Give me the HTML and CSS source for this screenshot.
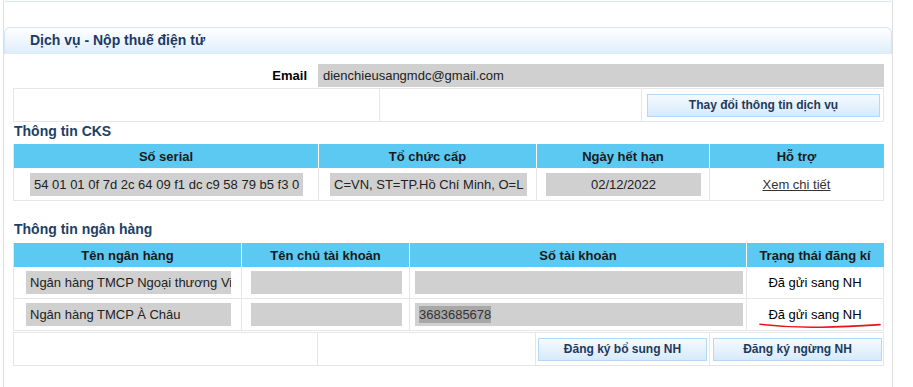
FILE: index.html
```html
<!DOCTYPE html>
<html lang="vi">
<head>
    <meta charset="UTF-8">
    <meta name="viewport" content="width=device-width, initial-scale=1.0">
    <title>Dịch vụ - Nộp thuế điện tử</title>
    <link rel="stylesheet" href="styles.css">
</head>
<body>
    <div class="page">
        <div class="prev-panel"></div>

        <div class="panel-head">Dịch vụ - Nộp thuế điện tử</div>

        <div class="panel-body">
            <div class="email-row">
                <div class="email-label">Email</div>
                <div class="field email-field">dienchieusangmdc@gmail.com</div>
            </div>

            <table class="grid action-grid">
                <tr>
                    <td class="ag-1"></td>
                    <td class="ag-2"></td>
                    <td class="ag-3"><button class="btn">Thay đổi thông tin dịch vụ</button></td>
                </tr>
            </table>

            <h2 class="section-title">Thông tin CKS</h2>
            <table class="grid cks-grid">
                <tr>
                    <th class="ck-1">Số serial</th>
                    <th class="ck-2">Tổ chức cấp</th>
                    <th class="ck-3">Ngày hết hạn</th>
                    <th class="ck-4">Hỗ trợ</th>
                </tr>
                <tr>
                    <td><div class="field f-serial">54 01 01 0f 7d 2c 64 09 f1 dc c9 58 79 b5 f3 0</div></td>
                    <td><div class="field f-issuer">C=VN, ST=TP.Hồ Chí Minh, O=L</div></td>
                    <td><div class="field f-date">02/12/2022</div></td>
                    <td class="center"><a href="#" class="detail-link">Xem chi tiết</a></td>
                </tr>
            </table>

            <h2 class="section-title bank-title">Thông tin ngân hàng</h2>
            <table class="grid bank-grid">
                <tr>
                    <th class="bk-1">Tên ngân hàng</th>
                    <th class="bk-2">Tên chủ tài khoản</th>
                    <th class="bk-3">Số tài khoản</th>
                    <th class="bk-4">Trạng thái đăng kí</th>
                </tr>
                <tr>
                    <td><div class="field f-bank">Ngân hàng TMCP Ngoại thương Việt Nam</div></td>
                    <td><div class="field f-owner"></div></td>
                    <td><div class="field f-account"></div></td>
                    <td class="center">Đã gửi sang NH</td>
                </tr>
                <tr>
                    <td><div class="field f-bank">Ngân hàng TMCP À Châu</div></td>
                    <td><div class="field f-owner"></div></td>
                    <td><div class="field f-account"><span class="selected">3683685678</span></div></td>
                    <td class="center marked">
                        Đã gửi sang NH
                        <svg class="scribble" width="124" height="8" viewBox="0 0 124 8">
                            <path d="M1 2.2 C 20 4.5, 40 5.6, 62 5.2 C 85 4.8, 105 3.6, 121 2.6" fill="none" stroke="#e8141b" stroke-width="1.6" stroke-linecap="round"/>
                        </svg>
                    </td>
                </tr>
            </table>

            <table class="grid action-grid bottom-grid">
                <tr>
                    <td class="bt-1"></td>
                    <td class="bt-2"></td>
                    <td class="bt-3"><button class="btn">Đăng ký bổ sung NH</button></td>
                    <td class="bt-4"><button class="btn">Đăng ký ngừng NH</button></td>
                </tr>
            </table>
        </div>
    </div>
</body>
</html>
```

FILE: styles.css
```css
* {
    margin: 0;
    padding: 0;
    box-sizing: border-box;
}

body {
    background: #fff;
    font-family: "Liberation Sans", Arial, sans-serif;
    font-size: 13px;
    color: #000;
}

/* khung trang */
.page {
    margin-left: 3px;
    width: 890px;
    height: 387px;
    border-left: 1px solid #dedede;
    border-right: 1px solid #dedede;
}

.prev-panel {
    margin: 0 1px;
    height: 2px;
    border: 1px solid #d6e7f7;
    border-top: none;
    border-radius: 0 0 5px 5px;
}

.panel-head {
    margin-top: 25px;
    height: 27px;
    padding-left: 25px;
    border: 1px solid #d3e5f6;
    border-bottom-color: #d9eaf9;
    border-radius: 6px 6px 0 0;
    background: linear-gradient(to bottom, #ffffff 0%, #f4f9fe 35%, #deedfb 100%);
    font-size: 14px;
    font-weight: bold;
    line-height: 25px;
    color: #1d3a66;
}

.panel-body {
    padding: 10px 8px 0 9px;
}

/* dòng email */
.email-row {
    display: flex;
    height: 23px;
}

.email-label {
    width: 305px;
    padding-right: 11px;
    text-align: right;
    font-weight: bold;
    line-height: 23px;
}

.field {
    height: 23px;
    line-height: 23px;
    padding: 0 4px;
    background: #d0d0d0;
    color: #222;
    white-space: nowrap;
    overflow: hidden;
}

.email-field {
    width: 566px;
    padding-left: 5px;
}

/* bảng */
.grid {
    width: 870px;
    table-layout: fixed;
    border-collapse: separate;
    border-spacing: 0;
    border-left: 1px solid #e6e6e6;
}

.grid th {
    height: 24px;
    background: #5cc9f2;
    border-right: 1px solid #fff;
    font-weight: bold;
    color: #1a1a1a;
    text-align: center;
}

.grid th:last-child {
    border-right-color: #5cc9f2;
}

.grid td {
    height: 33px;
    border-right: 1px solid #e6e6e6;
    border-bottom: 1px solid #e6e6e6;
    vertical-align: middle;
}

.center {
    text-align: center;
}

.action-grid {
    margin-top: 1px;
    border-top: 1px solid #e6e6e6;
}

.action-grid td {
    height: 33px;
}

.ag-1 { width: 366px; }
.ag-2 { width: 262px; }
.ag-3 { width: 242px; padding: 0 3px 0 5px; }

.btn {
    display: block;
    width: 100%;
    height: 23px;
    border: 1px solid #b4d8f6;
    background: linear-gradient(to bottom, #f4faff 0%, #e6f2fd 50%, #d6eafb 100%);
    font-family: "Liberation Sans", Arial, sans-serif;
    font-size: 12px;
    font-weight: bold;
    color: #1f3a5c;
    cursor: pointer;
}

.section-title {
    margin-top: 1px;
    height: 21px;
    font-size: 14px;
    line-height: 16px;
    font-weight: bold;
    color: #213f66;
    padding-left: 1px;
}

/* CKS */
.ck-1 { width: 305px; }
.ck-2 { width: 218px; }
.ck-3 { width: 173px; }
.ck-4 { width: 174px; }

.f-serial {
    width: 273px;
    margin-left: 16px;
    text-align: center;
}

.f-issuer {
    width: 197px;
    margin-left: 11px;
}

.f-date {
    width: 155px;
    margin-left: 9px;
    text-align: center;
}

.detail-link {
    color: #333;
    text-decoration: underline;
}

.bank-title {
    margin-top: 20px;
    height: 22px;
}

/* ngân hàng */
.bk-1 { width: 228px; }
.bk-2 { width: 168px; }
.bk-3 { width: 337px; }
.bk-4 { width: 137px; }

.bank-grid td {
    height: 32px;
}

.f-bank {
    width: 205px;
    margin-left: 12px;
}

.f-owner {
    width: 151px;
    margin-left: 9px;
}

.f-account {
    width: 328px;
    margin-left: 5px;
    color: #333;
}

.selected {
    background: #a8a8a8;
    padding: 1px 0;
}

.marked {
    position: relative;
}

.scribble {
    position: absolute;
    left: 12px;
    top: 23px;
}

/* dòng nút cuối */
.bottom-grid {
    margin-top: 1px;
}

.bottom-grid td {
    height: 33px;
}

.bt-1 { width: 304px; }
.bt-2 { width: 218px; }
.bt-3 { width: 174px; padding: 0 2px 0 2px; }
.bt-4 { width: 174px; padding: 0 1px 0 3px; }
```
